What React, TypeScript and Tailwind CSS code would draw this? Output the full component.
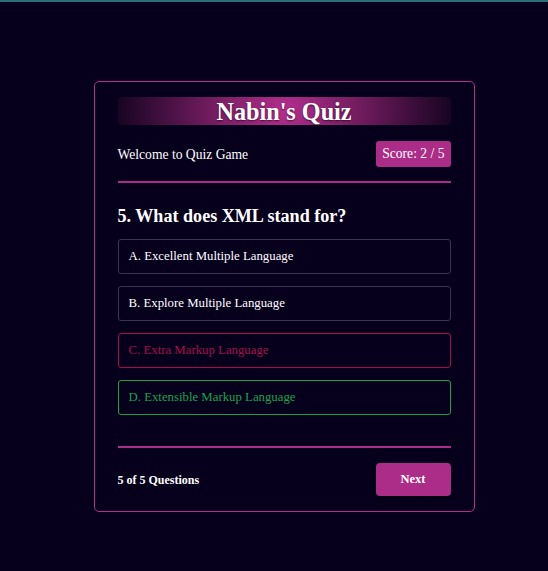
const options = [
  { label: 'A. Excellent Multiple Language', state: 'idle' },
  { label: 'B. Explore Multiple Language', state: 'idle' },
  { label: 'C. Extra Markup Language', state: 'wrong' },
  { label: 'D. Extensible Markup Language', state: 'right' },
];

function Option({ label, state }: { label: string; state: string }) {
  const cls =
    state === 'wrong'
      ? 'border-[#a50d4a] text-[#a50d4a]'
      : state === 'right'
        ? 'border-[#17a34a] text-[#17a34a]'
        : 'border-[#3a3550] text-white';
  return (
    <div className={`h-[35px] flex items-center px-[10px] pt-[2px] border-[1.5px] rounded-[3px] text-[12.8px] ${cls}`}>
      {label}
    </div>
  );
}

export default function App() {
  return (
    <div
      className="min-h-[571px] bg-[#07001d] border-t-2 border-[#2a6e78] pt-[79px]"
      style={{ fontFamily: '"Liberation Serif", "Times New Roman", serif' }}
    >
      <div className="ml-[94px] w-[381px] border-[1.5px] border-[#b0308a] rounded-[5px] pl-[22.5px] pr-[23.5px] pt-[14.5px] pb-[15.5px] text-white">
        <h1 className="h-[28px] pt-[1px] rounded-[4px] bg-[radial-gradient(circle,#b22e8c_0%,#7c1f66_38%,#170422_100%)] text-center text-[24.2px] font-bold leading-[28px] [text-shadow:0_1px_2px_rgba(0,0,0,0.6)]">
          Nabin's Quiz
        </h1>

        <div className="flex items-center justify-between mt-[16px]">
          <span className="pt-[3px] text-[13.6px]">Welcome to Quiz Game</span>
          <span className="h-[26px] px-[6px] pt-[2px] flex items-center bg-[#ab2d87] rounded-[3px] text-[13.6px]">
            Score: 2 / 5
          </span>
        </div>

        <div className="h-[2px] bg-[#ab2d87] mt-[14px]" />

        <h2 className="mt-[21px] text-[18.1px] font-bold leading-[24px]">5. What does XML stand for?</h2>

        <div className="flex flex-col gap-[12px] mt-[11px]">
          {options.map((o) => (
            <Option key={o.label} label={o.label} state={o.state} />
          ))}
        </div>

        <div className="h-[2px] bg-[#ab2d87] mt-[31px]" />

        <div className="flex items-center justify-between mt-[15px]">
          <span className="pt-[2px] text-[12px] font-bold">5 of 5 Questions</span>
          <button className="w-[75px] h-[33px] pt-[1px] bg-[#ab2d87] rounded-[4px] text-[12.5px] font-bold shadow-[0_2px_3px_rgba(0,0,0,0.5)]">
            Next
          </button>
        </div>
      </div>
    </div>
  );
}
